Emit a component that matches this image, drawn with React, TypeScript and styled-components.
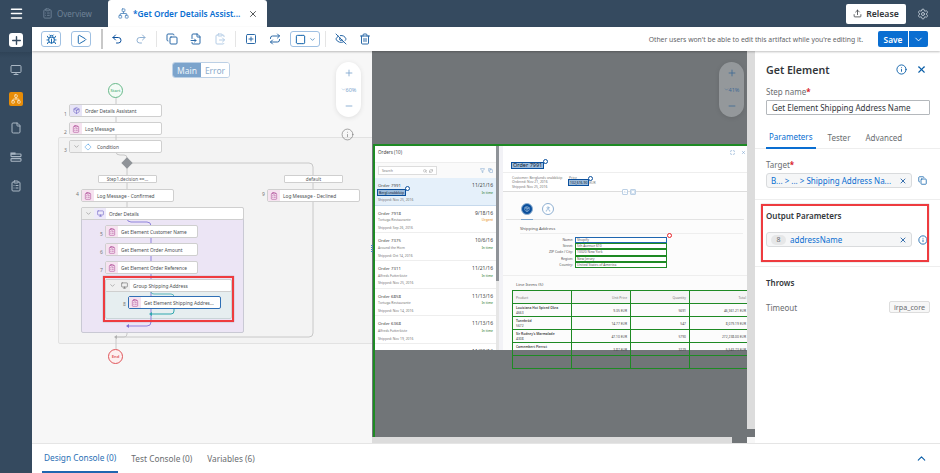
import React from 'react'
import styled, { createGlobalStyle } from 'styled-components'
import {
  Bug, ChevronDown, ClipboardList, ClipboardPaste, Copy, EyeOff, File, FileInput, Info, Maximize, Menu,
  Minus, Monitor, Network, Play, Plus, Redo2, Repeat, Search, RefreshCw, Settings, SquarePlus,
  Trash2, Undo2, Upload, User, X, Filter, ChevronUp, Package, Square,
} from 'lucide-react'

const GlobalStyle = createGlobalStyle`
  html, body { margin: 0; padding: 0; height: 100%; overflow: hidden; }
  body { font-family: "Noto Sans", "Liberation Sans", sans-serif; }
  * { box-sizing: border-box; }
`

const Shell = styled.div`
  width: 940px;
  height: 473px;
  display: grid;
  grid-template-columns: 32px 1fr;
  grid-template-rows: 27px 1fr;
  background: #354a5f;
  overflow: hidden;
`

const TopBar = styled.div`
  grid-column: 1 / 3;
  display: flex;
  align-items: flex-end;
  color: #fff;
`

const MenuCell = styled.div`
  width: 32px;
  height: 27px;
  display: flex;
  align-items: center;
  justify-content: center;
`

const Tab = styled.div<{ $active?: boolean }>`
  height: 27px;
  display: flex;
  align-items: center;
  gap: 4px;
  ${p => p.$active
    ? `width: 159px; background: #fff; color: #0a6ed1; font-size: 8.3px; font-weight: 600; border-radius: 3px 3px 0 0; padding-left: 10px;`
    : `width: 76px; color: #6f8296; font-size: 8px; padding-left: 10px;`}
`

const TabLabel = styled.span`
  flex: 1;
  white-space: nowrap;
`

const TabClose = styled.span`
  display: flex;
  width: 19px;
  color: #32363a;
`

const TopRight = styled.div`
  margin-left: auto;
  height: 27px;
  display: flex;
  align-items: center;
  padding-right: 11px;
  gap: 11px;
  color: #b6c2ce;
`

const ReleaseButton = styled.button`
  width: 60px;
  height: 20px;
  border: none;
  border-radius: 2px;
  background: #fff;
  color: #32363a;
  font: 600 8.7px "Noto Sans", sans-serif;
  display: flex;
  align-items: center;
  justify-content: center;
  gap: 4px;
  padding: 0;
`

const SideRail = styled.div`
  display: flex;
  flex-direction: column;
  align-items: center;
  color: #aab7c4;
`

const AddBox = styled.div`
  width: 14px;
  height: 14px;
  margin-top: 6px;
  background: #fff;
  color: #354a5f;
  border-radius: 3px;
  display: flex;
  align-items: center;
  justify-content: center;
`

const RailSplit = styled.div`
  width: 32px;
  height: 6px;
  margin-top: 5px;
  margin-bottom: 5px;
  background: linear-gradient(#2f4357, #354a5f);
`

const RailItem = styled.div<{ $active?: boolean }>`
  width: 14px;
  height: 14px;
  margin-bottom: 15px;
  border-radius: 2px;
  display: flex;
  align-items: center;
  justify-content: center;
  background: ${p => (p.$active ? '#e78c07' : 'transparent')};
  color: ${p => (p.$active ? '#fbe6c4' : '#aab7c4')};
`

const Main = styled.div`
  display: grid;
  grid-template-rows: 24px 392px 30px;
  min-height: 0;
  min-width: 0;
`

const ToolBar = styled.div`
  display: flex;
  align-items: center;
  background: #fff;
  padding-left: 9px;
  padding-right: 12px;
  box-shadow: 0 1px 2px rgba(0, 0, 0, 0.25);
  position: relative;
  z-index: 5;
`

const BorderButton = styled.div<{ $w?: number }>`
  width: ${p => p.$w ?? 20}px;
  height: 16px;
  border: 1px solid #9fc0e2;
  border-radius: 3px;
  margin-left: ${p => (p.$w ? 3 : 0)}px;
  margin-right: ${p => (p.$w ? 2 : 10)}px;
  color: #0a5ea8;
  display: flex;
  align-items: center;
  justify-content: center;
  gap: 3px;
`

const IconCell = styled.div<{ $off?: boolean }>`
  width: 24px;
  display: flex;
  justify-content: center;
  color: ${p => (p.$off ? '#b5cde6' : '#2c6aa8')};
`

const Sep = styled.div<{ $heavy?: boolean }>`
  width: ${p => (p.$heavy ? 2 : 1)}px;
  height: ${p => (p.$heavy ? 20 : 16)}px;
  margin: ${p => (p.$heavy ? '0 2px 0 0' : '0 3px')};
  background: ${p => (p.$heavy ? '#c8c8c8' : '#e5e5e5')};
`

const Notice = styled.span`
  margin-left: auto;
  font-size: 6.8px;
  color: #5f6366;
  margin-right: 15px;
  white-space: nowrap;
`

const SaveGroup = styled.div`
  display: flex;
  gap: 1px;
  height: 16px;
`

const SaveButton = styled.div<{ $narrow?: boolean }>`
  width: ${p => (p.$narrow ? 19 : 30)}px;
  background: #0a6ed1;
  color: #fff;
  font-size: 8.3px;
  font-weight: 600;
  display: flex;
  align-items: center;
  justify-content: center;
  border-radius: ${p => (p.$narrow ? '0 2px 2px 0' : '2px 0 0 2px')};
`

const Work = styled.div`
  display: grid;
  grid-template-columns: 340px 375px 8px 185px;
  min-height: 0;
  height: 392px;
`

const DiagramPane = styled.div`
  position: relative;
  background: #f7f7f7;
  overflow: hidden;
`

const Segments = styled.div`
  position: absolute;
  left: 140px;
  top: 11px;
  display: flex;
  width: 58px;
  height: 16px;
  border: 1px solid #bcd0e5;
  border-radius: 3px;
  font-size: 8.5px;
  overflow: hidden;
  background: #fff;
`

const Segment = styled.div<{ $on?: boolean }>`
  flex: 1;
  display: flex;
  align-items: center;
  justify-content: center;
  background: ${p => (p.$on ? '#7ca4cc' : '#fff')};
  color: ${p => (p.$on ? '#eef4fa' : '#8caccc')};
`

const ZoomPill = styled.div<{ $dim?: boolean; $right: number }>`
  position: absolute;
  top: 11px;
  right: ${p => p.$right}px;
  width: 25px;
  height: 55px;
  border-radius: 13px;
  display: flex;
  flex-direction: column;
  align-items: center;
  justify-content: space-between;
  padding: 6px 0;
  background: ${p => (p.$dim ? '#94989b' : '#fff')};
  color: ${p => (p.$dim ? '#3f6a96' : '#7ca4cc')};
  box-shadow: 0 1px 5px rgba(0, 0, 0, 0.1);
  font-size: 5.5px;
  z-index: 4;
`

const ZoomValue = styled.span`
  display: flex;
  align-items: center;
  white-space: nowrap;
`

const HelpMark = styled.div`
  position: absolute;
  left: 309px;
  top: 73px;
  color: #777;
  z-index: 2;
`

const FlowGroup = styled.div<{ $x: number; $y: number; $w: number; $h: number; $fill: string; $line?: string }>`
  position: absolute;
  left: ${p => p.$x}px;
  top: ${p => p.$y}px;
  width: ${p => p.$w}px;
  height: ${p => p.$h}px;
  background: ${p => p.$fill};
  border: 1px solid ${p => p.$line ?? '#e2e2e2'};
  border-radius: 2px;
`

const FlowNode = styled.div<{ $x: number; $y: number; $w?: number; $sel?: boolean }>`
  position: absolute;
  left: ${p => p.$x}px;
  top: ${p => p.$y}px;
  width: ${p => p.$w ?? 93}px;
  height: 13px;
  background: #fff;
  border: 1px solid ${p => (p.$sel ? '#2f6fb5' : '#cfcfcf')};
  border-radius: 2px;
  display: flex;
  align-items: center;
  font-size: 4.8px;
  color: #4c4f52;
  white-space: nowrap;
  z-index: 2;
`

const NodeIcon = styled.span<{ $bg: string; $c: string }>`
  width: 12px;
  height: 100%;
  background: ${p => p.$bg};
  color: ${p => p.$c};
  display: flex;
  align-items: center;
  justify-content: center;
  margin-right: 3px;
  flex-shrink: 0;
`

const FoldCell = styled.span`
  width: 12px;
  height: 100%;
  background: #efefef;
  color: #888;
  display: flex;
  align-items: center;
  justify-content: center;
  flex-shrink: 0;
`

const StepNo = styled.span<{ $x: number; $y: number }>`
  position: absolute;
  left: ${p => p.$x}px;
  top: ${p => p.$y}px;
  font-size: 5px;
  color: #777;
  z-index: 2;
`

const Terminal = styled.div<{ $x: number; $y: number; $c: string; $bg: string }>`
  position: absolute;
  left: ${p => p.$x}px;
  top: ${p => p.$y}px;
  width: 15px;
  height: 15px;
  border: 1px solid ${p => p.$c};
  border-radius: 50%;
  background: ${p => p.$bg};
  color: ${p => p.$c};
  font-size: 4.2px;
  font-weight: 600;
  display: flex;
  align-items: center;
  justify-content: center;
  z-index: 2;
`

const BranchTag = styled.div<{ $x: number; $y: number }>`
  position: absolute;
  left: ${p => p.$x}px;
  top: ${p => p.$y}px;
  width: 59px;
  height: 8px;
  background: #fff;
  border: 1px solid #cfcfcf;
  border-radius: 1px;
  font-size: 4.6px;
  color: #55585b;
  display: flex;
  align-items: center;
  justify-content: center;
  z-index: 2;
`

const RedFrame = styled.div<{ $x: number; $y: number; $w: number; $h: number }>`
  position: absolute;
  left: ${p => p.$x}px;
  top: ${p => p.$y}px;
  width: ${p => p.$w}px;
  height: ${p => p.$h}px;
  border: 2.5px solid #ee3b3f;
  box-shadow: 0 0 1px rgba(0, 0, 0, 0.4);
  z-index: 3;
`

const Wires = styled.svg`
  position: absolute;
  left: 0;
  top: 0;
  z-index: 1;
`

const CaptureColumn = styled.div`
  display: flex;
  flex-direction: column;
  min-width: 0;
  position: relative;
`

const SplitGrip = styled.div`
  position: absolute;
  left: -1px;
  top: 194px;
  width: 2px;
  height: 7px;
  background: repeating-linear-gradient(#4f86bd 0 1px, transparent 1px 2px);
  z-index: 4;
`

const CapturePane = styled.div`
  position: relative;
  height: 386px;
  flex-shrink: 0;
  background: #717578;
  overflow: hidden;
  padding: 95px 0 0 3px;
`

const HScroll = styled.div`
  height: 6px;
  flex-shrink: 0;
  display: flex;
  background: #717578;
`

const HThumb = styled.div`
  width: 360px;
  background: #dcdcdc;
`

const CaptureOutline = styled.div`
  position: absolute;
  left: 1px;
  top: 93px;
  width: 400px;
  height: 300px;
  border: solid #1e8a24;
  border-width: 2px 0 0 2px;
  z-index: 2;
`

const CaptureWindow = styled.div`
  display: flex;
  width: 372px;
  height: 204px;
  background: #fff;
`

const ListWindow = styled.div`
  width: 124px;
  height: 204px;
  background: #fff;
  overflow: hidden;
  flex-shrink: 0;
  border-right: 3px solid;
  border-image: linear-gradient(#8f9398 66%, #e6e6e6 66%) 1;
`

const WindowSplit = styled.div`
  width: 4px;
  flex-shrink: 0;
  background: #f2f2f6;
`

const ListTitle = styled.div`
  height: 17px;
  padding: 3px 3px;
  font-size: 4.6px;
  color: #444;
  border-bottom: 1px solid #eee;
`

const ListTools = styled.div`
  height: 15px;
  background: #fafafa;
  display: flex;
  align-items: center;
  padding: 0 3px;
  gap: 3px;
  color: #5b8ec2;
`

const ListSearch = styled.div`
  width: 59px;
  height: 9px;
  background: #fff;
  border: 1px solid #ddd;
  font-size: 3.4px;
  color: #777;
  display: flex;
  align-items: center;
  padding: 0 3px;
  margin-right: auto;
  gap: 2px;
`

const SearchGap = styled.span`
  flex: 1;
`

const OrderRow = styled.div<{ $sel?: boolean }>`
  height: 27.7px;
  padding: 4px 3px 0 3px;
  display: grid;
  grid-template-columns: 1fr auto;
  font-size: 3.4px;
  color: #777;
  line-height: 6.5px;
  background: ${p => (p.$sel ? '#e5f0fa' : '#fff')};
  border-bottom: 1px solid ${p => (p.$sel ? '#c6d9ec' : '#eee')};
`

const OrderTitle = styled.span`
  font-size: 4.3px;
  color: #444;
`

const OrderDate = styled.span`
  font-size: 5px;
  color: #444;
  text-align: right;
`

const OrderState = styled.span<{ $c: string }>`
  color: ${p => p.$c};
  text-align: right;
`

const Marked = styled.span`
  display: inline-block;
  outline: 1px solid #0a4f9c;
  background: #9dbcdc;
  color: #123;
  position: relative;
  padding: 0 1px;
  line-height: 5px;
`

const MarkDot = styled.span<{ $red?: boolean }>`
  position: absolute;
  right: -5px;
  top: -4px;
  width: 5px;
  height: 5px;
  border-radius: 50%;
  background: #fff;
  border: 1.5px solid ${p => (p.$red ? '#e8232a' : '#0a4f9c')};
`

const DetailWindow = styled.div`
  width: 244px;
  flex-shrink: 0;
  height: 204px;
  background: #fcfcfc;
  display: flex;
  flex-direction: column;
  & > * {
    flex-shrink: 0;
  }
`

const DetailHead = styled.div`
  height: 26px;
  background: #fff;
  padding: 15px 0 0 9px;
  font-size: 5.5px;
  color: #333;
  position: relative;
`

const HeadTools = styled.div`
  position: absolute;
  right: 1px;
  top: 4px;
  display: flex;
  gap: 6px;
  color: #5b8ec2;
`

const DetailMeta = styled.div`
  height: 20px;
  background: #fff;
  border-top: 1px solid #eee;
  border-bottom: 1px solid #ddd;
  display: grid;
  grid-template-columns: 48px auto;
  column-gap: 9px;
  justify-content: start;
  padding: 3px 0 0 9px;
  font-size: 3.4px;
  line-height: 4.3px;
  color: #777;
  position: relative;
`

const MetaBlock = styled.span`
  white-space: nowrap;
`

const CollapseBar = styled.div`
  position: absolute;
  left: 119px;
  bottom: -4px;
  display: flex;
  gap: 2px;
`

const CollapseKey = styled.span`
  width: 6px;
  height: 6px;
  border: 1px solid #bcd0e5;
  border-radius: 1px;
  background: #fff;
  color: #5b8ec2;
  display: flex;
  align-items: center;
  justify-content: center;
`

const DetailTabs = styled.div`
  height: 28px;
  padding: 11px 0 0 15px;
  margin: 0 3px;
  display: flex;
  gap: 9px;
  border-bottom: 1px solid #e3e3e3;
`

const RoundTab = styled.div<{ $on?: boolean }>`
  width: 12px;
  height: 12px;
  border-radius: 50%;
  display: flex;
  align-items: center;
  justify-content: center;
  position: relative;
  background: ${p => (p.$on ? '#0a4f9c' : '#fff')};
  border: 1px solid #8fb0d2;
  color: ${p => (p.$on ? '#c8dcf0' : '#5b8ec2')};
  ${p => p.$on && `
    &::after {
      content: '';
      position: absolute;
      left: -1px;
      right: -1px;
      bottom: -6px;
      height: 1.5px;
      background: #7ca4cc;
    }
  `}
`

const SectionTitle = styled.div`
  font-size: 4.3px;
  color: #555;
  padding-top: 5px;
  margin: 0 4px 3px 17px;
  height: 14px;
  border-bottom: 1px solid #eee;
`

const AddressGrid = styled.div`
  display: grid;
  grid-template-columns: 54px 92px;
  column-gap: 2px;
  margin-left: 16px;
  font-size: 3.4px;
  color: #555;
  width: 148px;
  position: relative;
`

const AddressKey = styled.span`
  text-align: right;
  line-height: 6.2px;
  white-space: nowrap;
`

const AddressValue = styled.span<{ $blue?: boolean }>`
  height: 6.2px;
  line-height: 4px;
  border: 1px solid ${p => (p.$blue ? '#1f66b0' : '#1e8a24')};
  padding-left: 1px;
  background: #fff;
`

const LineTitle = styled.div`
  font-size: 4.3px;
  color: #555;
  margin-top: 7px;
  padding: 5px 0 0 13px;
  height: 15px;
  border-top: 1px solid #eee;
`

const LineTable = styled.div`
  margin-left: 9px;
  width: 237px;
  display: grid;
  grid-template-columns: 59px 59px 59px 1fr;
  border-top: 1px solid #1e8a24;
`

const LineCell = styled.div<{ $head?: boolean; $right?: boolean }>`
  height: 13px;
  border: solid #1e8a24;
  border-width: 0 1px 1px 1px;
  margin-right: -1px;
  font-size: 3.3px;
  color: ${p => (p.$head ? '#777' : '#444')};
  background: ${p => (p.$head ? '#f5f5f5' : 'transparent')};
  padding: ${p => (p.$head || p.$right ? '4px' : '0.5px')} 3px 0;
  line-height: 5.6px;
  text-align: ${p => (p.$right ? 'right' : 'left')};
  font-weight: ${p => (p.$head || p.$right ? 400 : 600)};
  overflow: hidden;
  white-space: nowrap;
`

const ItemId = styled.span`
  font-weight: 400;
`

const Divider = styled.div`
  display: flex;
  flex-direction: column;
  position: relative;
  background: #f7f7f7;
`

const VThumb = styled.div`
  height: 378px;
  background: #dcdcdc;
`

const VEnd = styled.div`
  height: 8px;
  background: #717578;
`

const Panel = styled.div`
  background: #fff;
  display: flex;
  flex-direction: column;
  padding-top: 10px;
  color: #32363a;
  overflow: hidden;
`

const PanelHead = styled.div`
  display: flex;
  align-items: center;
  padding: 0 13px 0 11px;
  height: 17px;
  color: #0a5ea8;
  gap: 9px;
`

const PanelTitle = styled.span`
  font-size: 10.6px;
  font-weight: 600;
  color: #32363a;
  margin-right: auto;
`

const FieldLabel = styled.div<{ $top?: number }>`
  font-size: 8px;
  color: #6a6d70;
  padding-left: 11px;
  line-height: 11px;
  margin-top: ${p => p.$top ?? 0}px;
`

const Req = styled.span`
  color: #d9202a;
  font-weight: 700;
`

const TextBox = styled.div`
  margin: 3px 10px 0 11px;
  height: 15px;
  border: 1px solid #b4b8bc;
  border-radius: 1px;
  font-size: 8px;
  line-height: 13px;
  padding-left: 5px;
  white-space: nowrap;
  overflow: hidden;
`

const PanelTabs = styled.div`
  display: flex;
  height: 27px;
  margin-top: 7px;
  border-bottom: 1px solid #eee;
  padding-left: 11px;
  font-size: 8px;
`

const PanelTab = styled.div<{ $on?: boolean }>`
  height: 27px;
  display: flex;
  align-items: center;
  padding: 3px ${p => (p.$on ? 3 : 0)}px 0;
  margin-right: ${p => (p.$on ? 12 : 15)}px;
  color: ${p => (p.$on ? '#0a6ed1' : '#6a6d70')};
  border-bottom: ${p => (p.$on ? '2px solid #0a6ed1' : 'none')};
`

const Section = styled.div<{ $h: number }>`
  height: ${p => p.$h}px;
  border-bottom: 1px solid #eee;
  padding-top: 10px;
  position: relative;
`

const LastSection = styled.div`
  padding-top: 10px;
`

const TokenRow = styled.div<{ $top?: number }>`
  display: flex;
  align-items: center;
  padding-left: 11px;
  margin-top: ${p => p.$top ?? 3}px;
  gap: 6px;
  color: #0a5ea8;
`

const Token = styled.div`
  width: 146px;
  height: 15px;
  background: #f5f6f7;
  border: 1px solid #d9dbdd;
  border-radius: 3px;
  display: flex;
  align-items: center;
  padding: 0 4px;
  color: #0a6ed1;
  font-size: 8px;
  white-space: nowrap;
  gap: 3px;
`

const TokenText = styled.span`
  flex: 1;
  overflow: hidden;
`

const StepBadge = styled.span`
  width: 15px;
  height: 10px;
  background: #e6e7e8;
  border-radius: 5px;
  color: #6a6d70;
  font-size: 7px;
  display: flex;
  align-items: center;
  justify-content: center;
  margin-right: 1px;
`

const SubHead = styled.div`
  font-size: 8px;
  font-weight: 600;
  padding-left: 11px;
  line-height: 11px;
`

const PanelRedFrame = styled.div`
  position: absolute;
  left: 6px;
  top: 4px;
  width: 168px;
  height: 58px;
  border: 2.5px solid #ee3b3f;
  box-shadow: 0 0 1px rgba(0, 0, 0, 0.4);
`

const ThrowRow = styled.div`
  display: flex;
  align-items: center;
  justify-content: space-between;
  padding: 0 10px 0 11px;
  margin-top: 13px;
  font-size: 8px;
  color: #6a6d70;
`

const ThrowTag = styled.span`
  width: 41px;
  height: 12px;
  border: 1px solid #ddd;
  border-radius: 2px;
  background: #f7f7f7;
  font-size: 7.2px;
  line-height: 10px;
  text-align: center;
`

const ConsoleBar = styled.div`
  background: #fff;
  border-top: 1px solid #e5e5e5;
  display: flex;
  align-items: center;
  padding-left: 10px;
  font-size: 8.3px;
  gap: 11px;
`

const ConsoleTab = styled.div<{ $on?: boolean }>`
  height: 29px;
  display: flex;
  align-items: center;
  padding: 0 2px;
  color: ${p => (p.$on ? '#2a6fb5' : '#6a6d70')};
  border-bottom: ${p => (p.$on ? '2px solid #1f66b0' : 'none')};
`

const ConsoleEnd = styled.div`
  margin-left: auto;
  padding-right: 12px;
  color: #0a5ea8;
  display: flex;
`

const wires = [
  { d: 'M84 39V100', c: '#c8c8c8' },
  { d: 'M84 101q0 3 4 3h4q3 0 3 3v5', c: '#c8c8c8' },
  { d: 'M95 112H277q4 0 4 4V282q0 4-4 4H85', c: '#c8c8c8' },
  { d: 'M95 112V156', c: '#c8c8c8' },
  { d: 'M95 167q0 4 4 4h16q4 0 4 4V271q0 4-4 4H97', c: '#8f83dc' },
  { d: 'M119 240v1q0 2 3 2h17q3 0 3 3v2', c: '#5db5bb' },
  { d: 'M142 258v2q0 3-3 3H120', c: '#2fa7ae' },
  { d: 'M95 282v1q0 3-3 3H85', c: '#c8c8c8' },
  { d: 'M84 286v12', c: '#c8c8c8' },
]

const orders = [
  ['Order 7991', '11/21/16', 'Bergl.snabbköp', 'In time', 'Nov 25, 2016'],
  ['Order 7918', '9/18/16', 'Tortuga Restaurante', 'Urgent', 'Sep 26, 2016'],
  ['Order 7375', '10/6/16', 'Around the Horn', 'In time', 'Oct 14, 2016'],
  ['Order 7311', '11/21/16', 'Alfreds Futterkiste', 'In time', 'Nov 25, 2016'],
  ['Order 6858', '11/13/16', 'Tortuga Restaurante', 'In time', 'Nov 14, 2016'],
  ['Order 6368', '11/13/16', 'Alfreds Futterkiste', 'In time', 'Nov 19, 2016'],
  ['Order 6100', '11/20/16', 'Ernst Handel', 'In time', 'Nov 25, 2016'],
]

const lineRows = [
  ['Louisiana Hot Spiced Okra', '4663', '9.35 EUR', '5691', '46,361.21 EUR'],
  ['Tunnbröd', '5672', '14.77 EUR', '547', '8,079.19 EUR'],
  ['Sir Rodney\u2019s Marmalade', '4308', '47.10 EUR', '5790', '272,238.00 EUR'],
  ['Camembert Pierrot', '', '3.87 EUR', '3229', '5,543.73 EUR'],
]

const clip = <ClipboardList size={8} strokeWidth={1.6} />

// two staggered bars, the rail's "projects" glyph is not in lucide
const RailBars = () => (
  <svg width="12" height="12" viewBox="0 0 12 12" fill="none" stroke="currentColor" strokeWidth="1.1">
    <path d="M1 2h4v1H1z" />
    <rect x="1" y="3" width="10" height="2.6" rx=".6" />
    <rect x="1" y="7.6" width="10" height="2.6" rx=".6" />
  </svg>
)

export default function App() {
  return (
    <Shell>
      <GlobalStyle />
      <TopBar>
        <MenuCell><Menu size={15} strokeWidth={2.4} color="#fff" /></MenuCell>
        <Tab><ClipboardList size={11} /><TabLabel>Overview</TabLabel></Tab>
        <Tab $active>
          <Network size={11} color="#5b8ec2" />
          <TabLabel>*Get Order Details Assist...</TabLabel>
          <TabClose><X size={10} strokeWidth={2} /></TabClose>
        </Tab>
        <TopRight>
          <ReleaseButton><Upload size={9} />Release</ReleaseButton>
          <Settings size={12} />
        </TopRight>
      </TopBar>

      <SideRail>
        <AddBox><Plus size={13} strokeWidth={2.6} /></AddBox>
        <RailSplit />
        <RailItem><Monitor size={12} /></RailItem>
        <RailItem $active><Network size={10} /></RailItem>
        <RailItem><File size={12} /></RailItem>
        <RailItem><RailBars /></RailItem>
        <RailItem><ClipboardList size={12} /></RailItem>
      </SideRail>

      <Main>
        <ToolBar>
          <BorderButton><Bug size={11} /></BorderButton>
          <BorderButton><Play size={11} /></BorderButton>
          <Sep $heavy />
          <IconCell><Undo2 size={12} color="#0a4f9c" /></IconCell>
          <IconCell $off><Redo2 size={12} color="#8fb0d2" /></IconCell>
          <Sep />
          <IconCell><Copy size={12} /></IconCell>
          <IconCell><FileInput size={12} /></IconCell>
          <IconCell $off><ClipboardPaste size={12} /></IconCell>
          <Sep />
          <IconCell><SquarePlus size={12} /></IconCell>
          <IconCell><Repeat size={12} /></IconCell>
          <BorderButton $w={30}><Square size={11} strokeDasharray="2 1" /><ChevronDown size={7} /></BorderButton>
          <Sep />
          <IconCell><EyeOff size={12} /></IconCell>
          <IconCell><Trash2 size={12} /></IconCell>
          <Notice>Other users won&apos;t be able to edit this artifact while you&apos;re editing it.</Notice>
          <SaveGroup>
            <SaveButton>Save</SaveButton>
            <SaveButton $narrow><ChevronDown size={11} /></SaveButton>
          </SaveGroup>
        </ToolBar>

        <Work>
          <DiagramPane>
            <Segments>
              <Segment $on>Main</Segment>
              <Segment>Error</Segment>
            </Segments>
            <ZoomPill $right={11}>
              <Plus size={10} />
              <ZoomValue><ChevronDown size={5} />60%</ZoomValue>
              <Minus size={10} />
            </ZoomPill>
            <HelpMark><Info size={13} strokeWidth={1.2} /></HelpMark>

            <FlowGroup $x={26} $y={86} $w={330} $h={207} $fill="#f3f3f3" />
            <FlowGroup $x={49} $y={156} $w={163} $h={126} $fill="#ece5f5" $line="#c9c9d4" />
            <FlowGroup $x={73} $y={228} $w={127} $h={40} $fill="#e6eef0" $line="#c9d5d8" />

            <Wires width={340} height={392}>
              {wires.map(w => <path key={w.d} d={w.d} fill="none" stroke={w.c} strokeWidth={1} />)}
              <rect x={91} y={108} width={8} height={8} transform="rotate(45 95 112)" fill="#8f9398" />
              <path d="M97 273v4l-3-2z" fill="#7b6fd0" />
              <path d="M120 261v4l-3-2z" fill="#2fa7ae" />
              <path d="M85 284v4l-3-2z" fill="#b0b0b0" />
            </Wires>

            <Terminal $x={76} $y={32} $c="#67b98a" $bg="#f4fbf6">Start</Terminal>
            <StepNo $x={32} $y={60}>1</StepNo>
            <FlowNode $x={37} $y={53}>
              <NodeIcon $bg="#e7e4f6" $c="#6d62c4"><Package size={7} /></NodeIcon>Order Details Assistant
            </FlowNode>
            <StepNo $x={32} $y={78}>2</StepNo>
            <FlowNode $x={37} $y={71}>
              <NodeIcon $bg="#f6e3f0" $c="#a8418f">{clip}</NodeIcon>Log Message
            </FlowNode>
            <StepNo $x={32} $y={96}>3</StepNo>
            <FlowNode $x={37} $y={89}>
              <FoldCell><ChevronDown size={7} /></FoldCell>
              <NodeIcon $bg="#fff" $c="#2f8fe0"><Square size={6} style={{ transform: 'rotate(45deg)' }} /></NodeIcon>
              Condition
            </FlowNode>

            <BranchTag $x={66} $y={124}>Step1.decision ==...</BranchTag>
            <BranchTag $x={252} $y={124}>default</BranchTag>
            <StepNo $x={44} $y={140}>4</StepNo>
            <FlowNode $x={49} $y={138}>
              <NodeIcon $bg="#f6e3f0" $c="#a8418f">{clip}</NodeIcon>Log Message - Confirmed
            </FlowNode>
            <StepNo $x={230} $y={140}>9</StepNo>
            <FlowNode $x={235} $y={138}>
              <NodeIcon $bg="#f6e3f0" $c="#a8418f">{clip}</NodeIcon>Log Message - Declined
            </FlowNode>

            <FlowNode $x={49} $y={156} $w={163}>
              <FoldCell><ChevronDown size={7} /></FoldCell>
              <NodeIcon $bg="#eeeafa" $c="#6d62c4"><Monitor size={7} /></NodeIcon>
              Order Details
            </FlowNode>
            <StepNo $x={68} $y={180}>5</StepNo>
            <FlowNode $x={73} $y={174}>
              <NodeIcon $bg="#f6e3f0" $c="#a8418f">{clip}</NodeIcon>Get Element Customer Name
            </FlowNode>
            <StepNo $x={68} $y={198}>6</StepNo>
            <FlowNode $x={73} $y={192}>
              <NodeIcon $bg="#f6e3f0" $c="#a8418f">{clip}</NodeIcon>Get Element Order Amount
            </FlowNode>
            <StepNo $x={68} $y={216}>7</StepNo>
            <FlowNode $x={73} $y={210}>
              <NodeIcon $bg="#f6e3f0" $c="#a8418f">{clip}</NodeIcon>Get Element Order Reference
            </FlowNode>
            <FlowNode $x={73} $y={228} $w={127}>
              <FoldCell><ChevronDown size={7} /></FoldCell>
              <NodeIcon $bg="#efefef" $c="#666"><Monitor size={7} /></NodeIcon>
              Group Shipping Address
            </FlowNode>
            <StepNo $x={91} $y={250}>8</StepNo>
            <FlowNode $x={96} $y={245} $sel>
              <NodeIcon $bg="#f6e3f0" $c="#a8418f">{clip}</NodeIcon>Get Element Shipping Addres...
            </FlowNode>
            <RedFrame $x={71} $y={225} $w={131} $h={46} />
            <Terminal $x={76} $y={298} $c="#e0565b" $bg="#fdf0f0">End</Terminal>
          </DiagramPane>

          <CaptureColumn>
            <SplitGrip />
            <CapturePane>
              <CaptureOutline />
              <ZoomPill $dim $right={3}>
                <Plus size={10} />
                <ZoomValue><ChevronDown size={5} />41%</ZoomValue>
                <Minus size={10} />
              </ZoomPill>

              <CaptureWindow>
                <ListWindow>
                  <ListTitle>Orders (10)</ListTitle>
                  <ListTools>
                    <ListSearch>Search<SearchGap /><Search size={4} /><RefreshCw size={4} /></ListSearch>
                    <Filter size={5} />
                    <Copy size={5} />
                  </ListTools>
                  {orders.map((o, i) => (
                    <OrderRow key={o[0]} $sel={i === 0}>
                      <OrderTitle>{o[0]}</OrderTitle>
                      <OrderDate>{o[1]}</OrderDate>
                      <span>{i === 0 ? <Marked>{o[2]}<MarkDot /></Marked> : o[2]}</span>
                      <OrderState $c={o[3] === 'Urgent' ? '#e78c07' : '#2b7d2b'}>{o[3]}</OrderState>
                      <span>Shipped: {o[4]}</span>
                    </OrderRow>
                  ))}
                </ListWindow>
                <WindowSplit />

                <DetailWindow>
                  <DetailHead>
                    <Marked>Order 7991<MarkDot /></Marked>
                    <HeadTools><Maximize size={5} /><X size={5} /></HeadTools>
                  </DetailHead>
                  <DetailMeta>
                    <MetaBlock>Customer: Berglunds snabbköp<br />Ordered: Nov 21, 2016<br />Shipped: Nov 25, 2016</MetaBlock>
                    <MetaBlock>Price<br /><Marked>102,616.90<MarkDot /></Marked> EUR</MetaBlock>
                    <CollapseBar>
                      <CollapseKey><ChevronUp size={4} /></CollapseKey>
                      <CollapseKey><Maximize size={4} /></CollapseKey>
                    </CollapseBar>
                  </DetailMeta>
                  <DetailTabs>
                    <RoundTab $on><Package size={6} /></RoundTab>
                    <RoundTab><User size={6} /></RoundTab>
                  </DetailTabs>
                  <SectionTitle>Shipping Address</SectionTitle>
                  <AddressGrid>
                    <AddressKey>Name:</AddressKey><AddressValue $blue>Shopify<MarkDot $red /></AddressValue>
                    <AddressKey>Street:</AddressKey><AddressValue>5th Avenue 610</AddressValue>
                    <AddressKey>ZIP Code / City:</AddressKey><AddressValue>10020 New York</AddressValue>
                    <AddressKey>Region:</AddressKey><AddressValue>New Jersey</AddressValue>
                    <AddressKey>Country:</AddressKey><AddressValue>United States of America</AddressValue>
                  </AddressGrid>
                  <LineTitle>Line Items (5)</LineTitle>
                  <LineTable>
                    <LineCell $head>Product</LineCell>
                    <LineCell $head $right>Unit Price</LineCell>
                    <LineCell $head $right>Quantity</LineCell>
                    <LineCell $head $right>Total</LineCell>
                    {lineRows.map(r => (
                      <React.Fragment key={r[0]}>
                        <LineCell>{r[0]}<br /><ItemId>{r[1]}</ItemId></LineCell>
                        <LineCell $right>{r[2]}</LineCell>
                        <LineCell $right>{r[3]}</LineCell>
                        <LineCell $right>{r[4]}</LineCell>
                      </React.Fragment>
                    ))}
                    <LineCell /><LineCell /><LineCell /><LineCell />
                  </LineTable>
                </DetailWindow>
              </CaptureWindow>
            </CapturePane>
            <HScroll><HThumb /></HScroll>
          </CaptureColumn>

          <Divider>
            <VThumb />
            <VEnd />
          </Divider>

          <Panel>
            <PanelHead>
              <PanelTitle>Get Element</PanelTitle>
              <Info size={11} />
              <X size={11} strokeWidth={2.4} />
            </PanelHead>
            <FieldLabel $top={8}>Step name<Req>*</Req></FieldLabel>
            <TextBox>Get Element Shipping Address Name</TextBox>
            <PanelTabs>
              <PanelTab $on>Parameters</PanelTab>
              <PanelTab>Tester</PanelTab>
              <PanelTab>Advanced</PanelTab>
            </PanelTabs>
            <Section $h={51}>
              <FieldLabel>Target<Req>*</Req></FieldLabel>
              <TokenRow>
                <Token>
                  <TokenText>B... &gt; ... &gt; Shipping Address Na...</TokenText>
                  <X size={8} strokeWidth={2.4} color="#0a4f9c" />
                </Token>
                <Copy size={9} />
              </TokenRow>
            </Section>
            <Section $h={67}>
              <PanelRedFrame />
              <SubHead>Output Parameters</SubHead>
              <TokenRow $top={11}>
                <Token>
                  <StepBadge>8</StepBadge>
                  <TokenText>addressName</TokenText>
                  <X size={8} strokeWidth={2.4} color="#0a4f9c" />
                </Token>
                <Info size={10} />
              </TokenRow>
            </Section>
            <LastSection>
              <SubHead>Throws</SubHead>
              <ThrowRow>Timeout<ThrowTag>irpa_core</ThrowTag></ThrowRow>
            </LastSection>
          </Panel>
        </Work>

        <ConsoleBar>
          <ConsoleTab $on>Design Console (0)</ConsoleTab>
          <ConsoleTab>Test Console (0)</ConsoleTab>
          <ConsoleTab>Variables (6)</ConsoleTab>
          <ConsoleEnd><ChevronUp size={13} /></ConsoleEnd>
        </ConsoleBar>
      </Main>
    </Shell>
  )
}
